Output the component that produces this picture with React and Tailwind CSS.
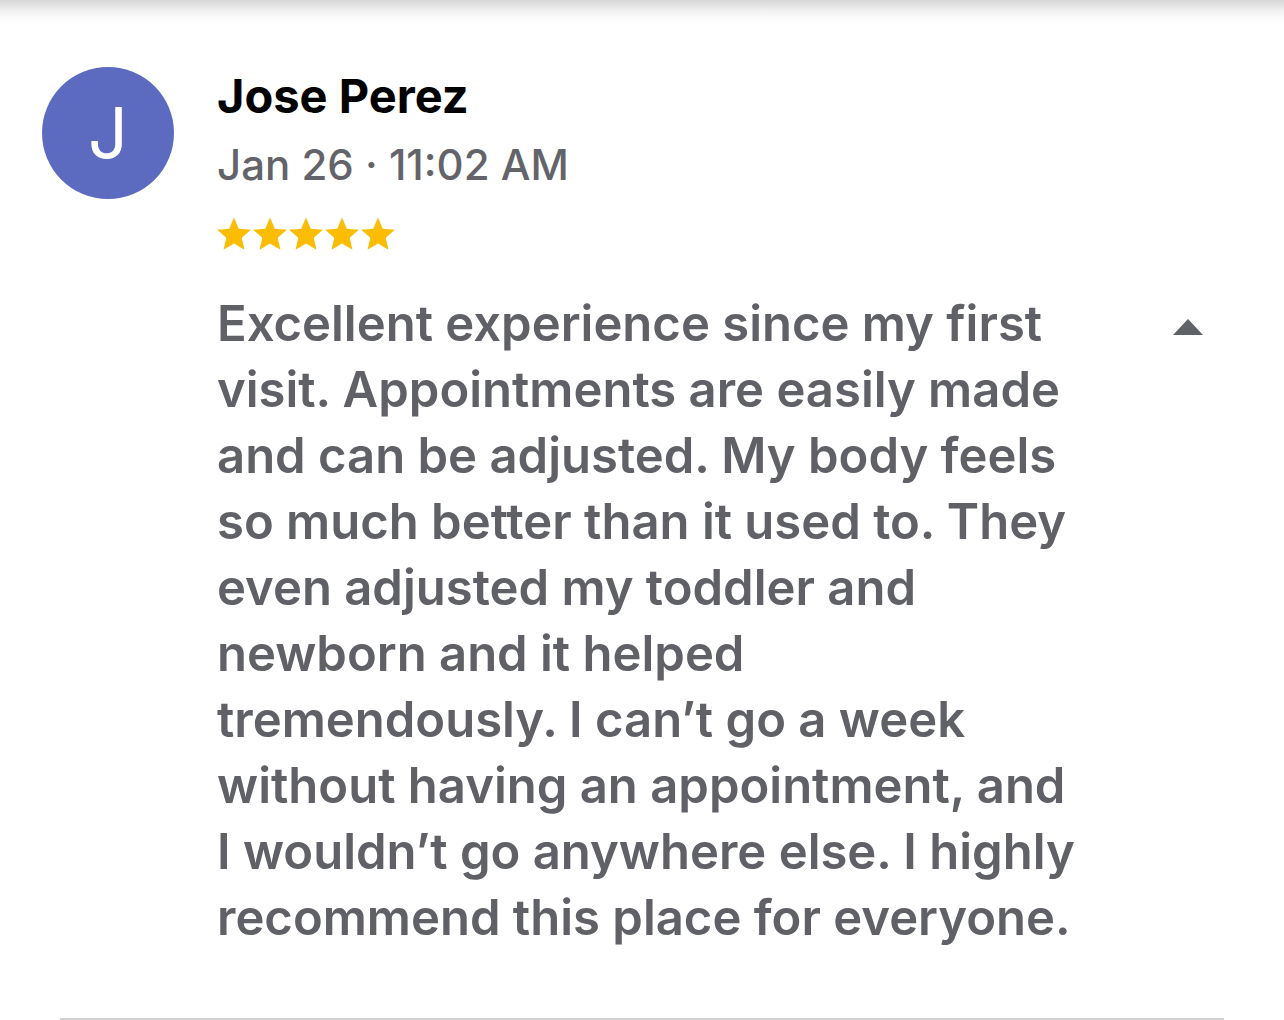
import React from 'react'

const lines = [
  'Excellent experience since my first',
  'visit. Appointments are easily made',
  'and can be adjusted. My body feels',
  'so much better than it used to. They',
  'even adjusted my toddler and',
  'newborn and it helped',
  'tremendously. I can\u2019t go a week',
  'without having an appointment, and',
  'I wouldn\u2019t go anywhere else. I highly',
  'recommend this place for everyone.',
]

function Star() {
  return (
    <svg width="34" height="33" viewBox="1 1.2 22 21.2" preserveAspectRatio="none" className="block">
      <path
        fill="#fbbc04"
        d="M12 1.5l3.09 7.26 7.86.66-5.97 5.17 1.79 7.68L12 18.2l-6.77 4.07 1.79-7.68L1.05 9.42l7.86-.66z"
      />
    </svg>
  )
}

export default function App() {
  return (
    <div
      className="w-[1284px] h-[1020px] bg-white overflow-hidden flex flex-col"
      style={{ fontFamily: 'Inter, "Noto Sans", sans-serif' }}
    >
      <div className="h-[22px] shrink-0 bg-gradient-to-b from-[#d6d6d6] via-[#f2f2f2] to-white" />
      <div className="flex pl-[42px] pt-[45px]">
        <div className="w-[132px] h-[132px] shrink-0 rounded-full bg-[#5c6bc0] flex items-center justify-center text-white text-[70px] leading-none font-normal">
          J
        </div>
        <div className="ml-[43px] flex-1 pr-[81px]">
          <div className="text-[47px] leading-[56px] font-bold text-black mt-[1px]">
            Jose Perez
          </div>
          <div className="mt-[16px] text-[42px] leading-[50px] font-medium text-[#636469]">
            Jan 26 · 11:02 AM
          </div>
          <div className="mt-[27px] flex gap-[2px]">
            <Star />
            <Star />
            <Star />
            <Star />
            <Star />
          </div>
          <div className="mt-[41px] flex justify-between">
            <div className="text-[49px] leading-[66px] font-semibold text-[#606166] tracking-[0px]">
              {lines.map((l) => (
                <div key={l} className="whitespace-nowrap">
                  {l}
                </div>
              ))}
            </div>
            <svg width="30" height="16" viewBox="0 0 30 16" className="mt-[28px] shrink-0">
              <path d="M15 0L30 16H0z" fill="#5f6368" />
            </svg>
          </div>
        </div>
      </div>
      <div className="mt-auto mx-[60px] h-[2px] bg-[#d3d3d3] mb-0" />
    </div>
  )
}
